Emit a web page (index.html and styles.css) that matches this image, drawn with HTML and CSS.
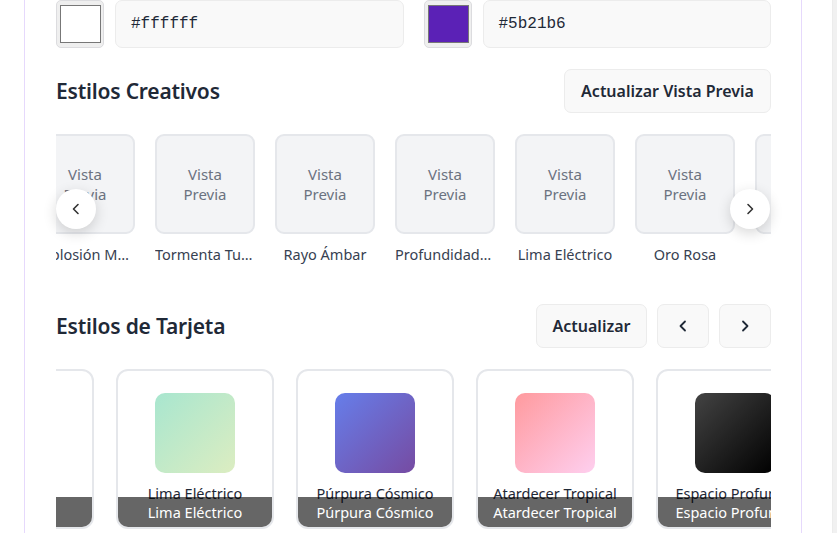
FILE: index.html
```html
<!DOCTYPE html>
<html lang="es">
<head>
<meta charset="utf-8">
<title>Estilos</title>
<link rel="stylesheet" href="styles.css">
</head>
<body>
<div class="page">
  <main class="panel">
    <div class="colors">
      <div class="color-field">
        <div class="swatch"><span class="swatch-fill fill-white"></span></div>
        <div class="hex-input">#ffffff</div>
      </div>
      <div class="color-field">
        <div class="swatch"><span class="swatch-fill fill-purple"></span></div>
        <div class="hex-input">#5b21b6</div>
      </div>
    </div>

    <section class="section section-creative">
      <div class="section-head">
        <h2 class="section-title">Estilos Creativos</h2>
        <button class="btn btn-wide">Actualizar Vista Previa</button>
      </div>
      <div class="carousel">
        <div class="viewport">
          <div class="track track-creative">
            <div class="style-item"><div class="preview">Vista Previa</div><div class="style-label">Explosión Mágica</div></div>
            <div class="style-item"><div class="preview">Vista Previa</div><div class="style-label">Tormenta Turquesa</div></div>
            <div class="style-item"><div class="preview">Vista Previa</div><div class="style-label">Rayo Ámbar</div></div>
            <div class="style-item"><div class="preview">Vista Previa</div><div class="style-label">Profundidad Oceánica</div></div>
            <div class="style-item"><div class="preview">Vista Previa</div><div class="style-label">Lima Eléctrico</div></div>
            <div class="style-item"><div class="preview">Vista Previa</div><div class="style-label">Oro Rosa</div></div>
            <div class="style-item"><div class="preview">Vista Previa</div><div class="style-label">Neón Azul</div></div>
          </div>
        </div>
        <button class="nav nav-left" aria-label="Anterior">
          <svg width="16" height="16" viewBox="0 0 16 16"><path d="M10 3.5 L5.5 8 L10 12.5" fill="none" stroke="#333" stroke-width="1.6" stroke-linecap="round" stroke-linejoin="round"/></svg>
        </button>
        <button class="nav nav-right" aria-label="Siguiente">
          <svg width="16" height="16" viewBox="0 0 16 16"><path d="M6 3.5 L10.5 8 L6 12.5" fill="none" stroke="#333" stroke-width="1.6" stroke-linecap="round" stroke-linejoin="round"/></svg>
        </button>
      </div>
    </section>

    <section class="section section-cards">
      <div class="section-head">
        <h2 class="section-title">Estilos de Tarjeta</h2>
        <div class="head-actions">
          <button class="btn btn-update">Actualizar</button>
          <button class="btn btn-icon" aria-label="Anterior">
            <svg width="16" height="16" viewBox="0 0 16 16"><path d="M10 3.5 L5.5 8 L10 12.5" fill="none" stroke="#1f2937" stroke-width="1.8" stroke-linecap="round" stroke-linejoin="round"/></svg>
          </button>
          <button class="btn btn-icon" aria-label="Siguiente">
            <svg width="16" height="16" viewBox="0 0 16 16"><path d="M6 3.5 L10.5 8 L6 12.5" fill="none" stroke="#1f2937" stroke-width="1.8" stroke-linecap="round" stroke-linejoin="round"/></svg>
          </button>
        </div>
      </div>
      <div class="viewport">
        <div class="track track-cards">
          <div class="card"><div class="card-swatch grad-rose"></div><div class="card-name">Oro</div><div class="card-overlay">Oro</div></div>
          <div class="card"><div class="card-swatch grad-lime"></div><div class="card-name">Lima Eléctrico</div><div class="card-overlay">Lima Eléctrico</div></div>
          <div class="card"><div class="card-swatch grad-cosmic"></div><div class="card-name">Púrpura Cósmico</div><div class="card-overlay">Púrpura Cósmico</div></div>
          <div class="card"><div class="card-swatch grad-tropical"></div><div class="card-name">Atardecer Tropical</div><div class="card-overlay">Atardecer Tropical</div></div>
          <div class="card"><div class="card-swatch grad-space"></div><div class="card-name">Espacio Profundo</div><div class="card-overlay">Espacio Profundo</div></div>
        </div>
      </div>
    </section>
  </main>
  <div class="scroll-strip"></div>
</div>
</body>
</html>
```

FILE: styles.css
```css
* { box-sizing: border-box; }

html, body {
  margin: 0;
  padding: 0;
  background: #ffffff;
}

body {
  font-family: "Noto Sans", "Open Sans", sans-serif;
  color: #1f2937;
  overflow: hidden;
}

.page {
  display: flex;
  width: 837px;
  height: 533px;
  padding-left: 24px;
  overflow: hidden;
}

.panel {
  width: 778px;
  flex-shrink: 0;
  border-left: 1px solid #e6d9fc;
  border-right: 1px solid #e6d9fc;
  padding: 0 30px 0 31px;
  height: 533px;
}

.scroll-strip {
  margin-left: 30px;
  width: 5px;
  height: 533px;
  background: #f1f1f1;
  border-left: 1px solid #ececec;
}

/* Color inputs */
.colors {
  display: grid;
  grid-template-columns: 1fr 1fr;
  column-gap: 20px;
}

.color-field {
  display: flex;
  gap: 11px;
  height: 48px;
}

.swatch {
  width: 48px;
  height: 48px;
  flex-shrink: 0;
  background: #efefef;
  border: 1px solid #dcdcdf;
  border-radius: 5px;
  padding: 4px 2px 4px 3px;
  display: flex;
}

.swatch-fill {
  flex: 1;
  border: 1px solid #777777;
}

.fill-white { background: #ffffff; }
.fill-purple { background: #5b21b6; }

.hex-input {
  flex: 1;
  height: 48px;
  background: #f9f9f9;
  border: 1px solid #ececec;
  border-radius: 7px;
  padding-left: 15px;
  display: flex;
  align-items: center;
  font-family: "Liberation Mono", "DejaVu Sans Mono", monospace;
  font-size: 16px;
  color: #1f2937;
}

/* Sections */
.section-creative { margin-top: 21px; }
.section-cards { margin-top: 38px; }

.section-head {
  display: flex;
  justify-content: space-between;
  align-items: center;
  height: 44px;
  margin-bottom: 21px;
}

.section-title {
  margin: 0;
  font-size: 21px;
  font-weight: 600;
  color: #1f2937;
  letter-spacing: -0.2px;
}

.head-actions {
  display: flex;
  gap: 10px;
}

.btn {
  height: 44px;
  background: #f9f9f9;
  border: 1px solid #ececec;
  border-radius: 7px;
  font-family: inherit;
  font-size: 16px;
  font-weight: 600;
  color: #1f2937;
  display: flex;
  align-items: center;
  justify-content: center;
  padding: 0;
  cursor: pointer;
}

.btn-wide { width: 207px; }
.btn-update { width: 111px; }
.btn-icon { width: 52px; }

/* Carousel */
.carousel {
  position: relative;
  height: 132px;
}

.viewport {
  width: 715px;
  overflow: hidden;
}

.track {
  display: flex;
}

.track-creative {
  gap: 20px;
  transform: translateX(-21px);
}

.style-item {
  width: 100px;
  flex-shrink: 0;
}

.preview {
  width: 100px;
  height: 100px;
  background: #f3f4f6;
  border: 2px solid #e5e7eb;
  border-radius: 9px;
  display: flex;
  align-items: center;
  justify-content: center;
  text-align: center;
  font-size: 15px;
  line-height: 20px;
  color: #6b7280;
  padding: 0 18px;
}

.style-label {
  margin-top: 10px;
  font-size: 14.5px;
  line-height: 20px;
  color: #374151;
  text-align: center;
  white-space: nowrap;
  overflow: hidden;
  text-overflow: ellipsis;
}

.nav {
  position: absolute;
  top: 55px;
  width: 40px;
  height: 40px;
  border-radius: 50%;
  border: none;
  background: #ffffff;
  box-shadow: 0 4px 14px rgba(0, 0, 0, 0.16);
  display: flex;
  align-items: center;
  justify-content: center;
  padding: 0;
}

.nav-left { left: 0; }
.nav-right { right: 1px; }

/* Cards */
.track-cards {
  gap: 22px;
  transform: translateX(-120px);
}

.card {
  position: relative;
  width: 158px;
  height: 160px;
  flex-shrink: 0;
  background: #ffffff;
  border: 2px solid #e5e7eb;
  border-radius: 12px;
  overflow: hidden;
  display: flex;
  flex-direction: column;
  align-items: center;
  padding-top: 22px;
}

.card-swatch {
  width: 80px;
  height: 80px;
  border-radius: 10px;
  flex-shrink: 0;
}

.grad-rose { background: linear-gradient(135deg, #f6d365, #fda085); }
.grad-lime { background: linear-gradient(135deg, #a8e6cf, #dcedc1); }
.grad-cosmic { background: linear-gradient(135deg, #667eea, #764ba2); }
.grad-tropical { background: linear-gradient(135deg, #ff9a9e, #fecfef); }
.grad-space { background: linear-gradient(135deg, #434343, #000000); }

.card-name {
  margin-top: 10px;
  font-size: 14.5px;
  line-height: 20px;
  color: #1f2937;
  white-space: nowrap;
}

.card-overlay {
  position: absolute;
  left: 0;
  right: 0;
  bottom: 0;
  height: 30px;
  background: rgba(0, 0, 0, 0.6);
  color: #ffffff;
  font-size: 14.5px;
  line-height: 30px;
  text-align: center;
  white-space: nowrap;
}
```
